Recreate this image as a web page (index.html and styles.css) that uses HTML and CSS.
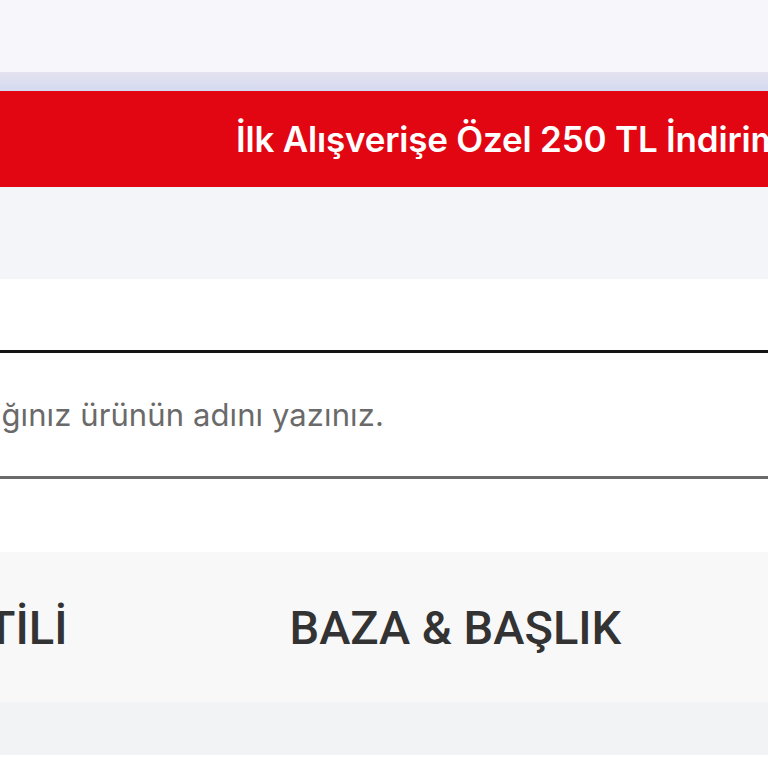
FILE: index.html
```html
<!DOCTYPE html>
<html lang="tr">
<head>
  <meta charset="UTF-8" />
  <title>Mağaza</title>
  <link rel="stylesheet" href="styles.css">
</head>
<body>
  <div class="topbar"></div>
  <div class="promo-shade"></div>
  <div class="promo">
    <span class="promo-text">İlk Alışverişe Özel 250 TL İndirim</span>
  </div>
  <div class="subbar"></div>
  <div class="header"></div>
  <div class="search">
    <input type="text" class="search-input" placeholder="Aradığınız ürünün adını yazınız." />
  </div>
  <div class="spacer"></div>
  <div class="categories">
    <div class="cat-track">
      <a class="cat-item" href="#">EV TEKSTİLİ</a>
      <a class="cat-item" href="#">BAZA &amp; BAŞLIK</a>
      <a class="cat-item" href="#">YATAK</a>
    </div>
  </div>
  <div class="strip"></div>
</body>
</html>
```
FILE: styles.css
```css
body {
  margin: 0;
  background: #fff;
  font-family: Inter, "Open Sans", sans-serif;
  overflow: hidden;
}
.topbar {
  height: 72px;
  background: #f7f7fb;
}
.promo-shade {
  height: 19px;
  background: linear-gradient(#e4e2ef, #d5daf1);
}
.promo {
  height: 96px;
  background: #e20613;
  display: flex;
  align-items: center;
  padding-left: 236px;
  white-space: nowrap;
  overflow: hidden;
}
.promo-text {
  color: #fff;
  font-size: 35px;
  font-weight: 600;
  letter-spacing: -0.2px;
}
.subbar {
  height: 92px;
  background: #f3f5f9;
}
.header {
  height: 71px;
  background: #fff;
}
.search {
  border-top: 3px solid #141414;
  border-bottom: 3px solid #6b6b6b;
  height: 123px;
  display: flex;
  align-items: center;
  overflow: hidden;
}
.search-input {
  border: none;
  outline: none;
  background: none;
  width: 140%;
  margin-left: -76px;
  padding: 0;
  font-family: Inter, "Open Sans", sans-serif;
  font-size: 31px;
  letter-spacing: 0.1px;
  color: #333;
}
.search-input::placeholder {
  color: #6a6a6a;
}
.spacer {
  height: 73px;
}
.categories {
  height: 150px;
  background: #f8f8f8;
  display: flex;
  align-items: center;
  overflow: hidden;
}
.cat-track {
  display: flex;
  gap: 222px;
  margin-left: -194px;
  white-space: nowrap;
}
.cat-item {
  font-family: Roboto, "Liberation Sans", sans-serif;
  font-size: 47px;
  font-weight: 500;
  color: #333;
  text-decoration: none;
}
.strip {
  height: 53px;
  background: #f1f3f5;
}
```
